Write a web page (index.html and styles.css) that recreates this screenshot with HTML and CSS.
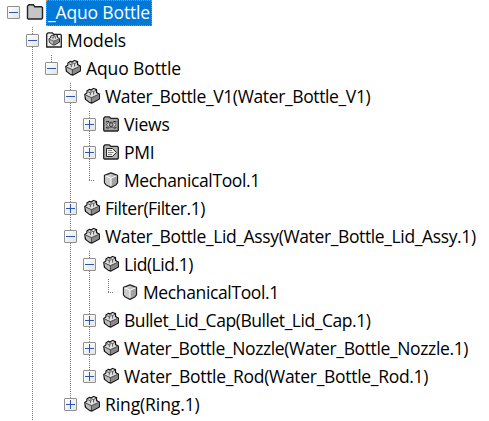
FILE: index.html
```html
<!DOCTYPE html>
<html lang="en">
<head>
  <meta charset="UTF-8" />
  <title>Aquo Bottle</title>
  <link rel="stylesheet" href="styles.css">
</head>
<body>
  <!-- shared icons -->
  <svg class="icon-defs" width="0" height="0">
    <linearGradient id="metal" x1="0" y1="0" x2="1" y2="1">
      <stop offset="0" stop-color="#eee" />
      <stop offset="1" stop-color="#777" />
    </linearGradient>
    <symbol id="folder" viewBox="0 0 18 18">
      <path d="M1.500 15.300V3.200L3 1.700h4.200l1.600 2h6.500l1.200 1v10.400l-.8.900H2.300z" fill="#c6c6c6" stroke="#222" stroke-width="1.400" />
    </symbol>
    <symbol id="part" viewBox="0 0 18 18">
      <path d="M1.800 7.500L4 6V4L6.200 2.500 8 3l2.500-1.500L13.500 2.700v3L16.300 7v5L9 16 6.500 15.300 2.500 12.300z" fill="#aaa" stroke="#111" stroke-width="1.300" stroke-linejoin="round" />
      <path d="M2.500 8l5.500 2.700v4.500l-1.500-.5-3.400-2.700z" fill="#bbb" />
      <path d="M2.700 7.600L4.600 6.400V4.300L6.300 3.200l1.700.5 2.500-1.400 2.300.9v3L15.500 7.200 8.500 10.200z" fill="#e2e2e2" />
      <path d="M8.500 10.800l7.200-3.200v4l-7 3.700z" fill="#888" />
      <path d="M4.800 4.700L7.300 5.700v2.500M8 3.700v2.500M8.300 3.600l2.300 1v3M10.600 4.600l2.400-1.300M3 8.200l5.300 2.500 7-3.200M8.400 10.700v4.500" fill="none" stroke="#333" stroke-width=".8" />
    </symbol>
    <symbol id="models" viewBox="0 0 18 18">
      <path d="M1.700 16V3.200L3 1.800h4.200l1.600 1.500h6.700l.8.900V16z" fill="#eee" stroke="#222" stroke-width="1.300" />
      <use href="#part" x="2.700" y="2.500" width="13" height="13" />
    </symbol>
    <symbol id="views" viewBox="0 0 18 18">
      <path d="M1.700 15.300V3.200L3 1.800h4.200l1.600 1.500h6.500l1 1v11l-.7.700H2.400z" fill="#a5a5a5" stroke="#222" stroke-width="1.300" />
      <path d="M4.500 7.500v-1H7M11.500 6.500H14v1M14 12v1h-2.500M7 13H4.500v-1" fill="none" stroke="#222" stroke-width=".9" />
      <path d="M4.300 9.700L7 7.300h4.500l2.700 2.400-2.700 2.500H7z" fill="#ddd" stroke="#333" stroke-width=".8" />
      <circle cx="9.200" cy="9.700" r="1.900" fill="#aaa" stroke="#222" stroke-width=".9" />
    </symbol>
    <symbol id="pmi" viewBox="0 0 18 18">
      <path d="M1.700 15.300V3.200L3 1.800h4.200l1.600 1.500h6.500l1 1v11l-.7.700H2.400z" fill="#b5b5b5" stroke="#222" stroke-width="1.300" />
      <path d="M4.500 5.500h6l4 4-4 4h-6z" fill="#eef2e8" stroke="#222" />
      <path d="M6 7.500h4M6 9.500h5.500M6 11.500h4" stroke="#777" stroke-width=".9" />
    </symbol>
    <symbol id="cube" viewBox="0 0 18 18">
      <path d="M2.500 4.300L9 1.800l6.500 2.500v7.500L13.700 14 9 16.300 4.300 14l-1.800-2.200z" fill="url(#metal)" stroke="#222" stroke-width="1.300" stroke-linejoin="round" />
      <path d="M3.200 5L9 7.300v8.200L4.700 13.500l-1.500-2z" fill="#c9c9c9" />
      <path d="M14.800 5L9 7.300v8.200l4.300-2 1.500-2z" fill="#a2a2a2" />
      <path d="M3.500 4.800L9 7.200l5.500-2.400M9 7.200v7.500" fill="none" stroke="#fff" />
    </symbol>
  </svg>

  <ul class="tree">
    <li>
      <div class="row"><span class="toggle"></span><svg class="icon"><use href="#folder" /></svg><span class="label selected">_Aquo Bottle</span></div>
      <ul>
        <li class="open-ended">
          <div class="row"><span class="toggle"></span><svg class="icon"><use href="#models" /></svg><span class="label wide">Models</span></div>
          <ul>
            <li>
              <div class="row"><span class="toggle"></span><svg class="icon"><use href="#part" /></svg><span class="label wide">Aquo Bottle</span></div>
              <ul>
                <li>
                  <div class="row"><span class="toggle"></span><svg class="icon"><use href="#part" /></svg><span class="label snug">Water_Bottle_V1(Water_Bottle_V1)</span></div>
                  <ul>
                    <li><div class="row"><span class="toggle plus"></span><svg class="icon"><use href="#views" /></svg><span class="label">Views</span></div></li>
                    <li><div class="row"><span class="toggle plus"></span><svg class="icon"><use href="#pmi" /></svg><span class="label">PMI</span></div></li>
                    <li><div class="row"><span class="elbow"></span><svg class="icon"><use href="#cube" /></svg><span class="label snug">MechanicalTool.1</span></div></li>
                  </ul>
                </li>
                <li><div class="row"><span class="toggle plus"></span><svg class="icon"><use href="#part" /></svg><span class="label tight">Filter(Filter.1)</span></div></li>
                <li>
                  <div class="row"><span class="toggle"></span><svg class="icon"><use href="#part" /></svg><span class="label snug">Water_Bottle_Lid_Assy(Water_Bottle_Lid_Assy.1)</span></div>
                  <ul>
                    <li>
                      <div class="row"><span class="toggle"></span><svg class="icon"><use href="#part" /></svg><span class="label tight">Lid(Lid.1)</span></div>
                      <ul>
                        <li><div class="row"><span class="elbow"></span><svg class="icon"><use href="#cube" /></svg><span class="label snug">MechanicalTool.1</span></div></li>
                      </ul>
                    </li>
                    <li><div class="row"><span class="toggle plus"></span><svg class="icon"><use href="#part" /></svg><span class="label tight">Bullet_Lid_Cap(Bullet_Lid_Cap.1)</span></div></li>
                    <li><div class="row"><span class="toggle plus"></span><svg class="icon"><use href="#part" /></svg><span class="label snug">Water_Bottle_Nozzle(Water_Bottle_Nozzle.1)</span></div></li>
                    <li><div class="row"><span class="toggle plus"></span><svg class="icon"><use href="#part" /></svg><span class="label mild">Water_Bottle_Rod(Water_Bottle_Rod.1)</span></div></li>
                  </ul>
                </li>
                <li><div class="row"><span class="toggle plus"></span><svg class="icon"><use href="#part" /></svg><span class="label wide">Ring(Ring.1)</span></div></li>
              </ul>
            </li>
          </ul>
        </li>
      </ul>
    </li>
  </ul>
</body>
</html>
```
FILE: styles.css
```css
body {
  margin: 0;
  height: 421px;
  overflow: hidden;
  background-color: #fff;
  color: #000;
  font-family: "Open Sans", "Noto Sans", sans-serif;
  font-size: 17.5px;
  letter-spacing: -0.2px;
}

.icon-defs {
  display: block;
}

ul {
  list-style: none;
  margin: 0;
  padding: 0 0 0 19px;
}

.tree {
  margin-top: -1px;
  padding-left: 7px;
}

/* dotted guide line through the toggles */
.tree ul > li {
  background: repeating-linear-gradient(to bottom, #777 0 1px, transparent 1px 2px) 6px 0 / 1px 100% no-repeat;
}

.tree ul > li:last-child {
  background-size: 1px 14px;
}

.tree ul > li.open-ended {
  background-size: 1px 100%;
  padding-bottom: 10px;
}

.row {
  display: flex;
  align-items: center;
  height: 28px;
  white-space: nowrap;
}

.toggle {
  box-sizing: border-box;
  flex: none;
  width: 13px;
  height: 13px;
  margin-bottom: 1px;
  border: 1px solid #919191;
  border-radius: 1px;
  background:
    linear-gradient(#2c55b0, #2c55b0) 1px 5px / 9px 1px no-repeat,
    linear-gradient(135deg, #fff, #e4e4e4);
}

.toggle.plus {
  background:
    linear-gradient(#2c55b0, #2c55b0) 1px 5px / 9px 1px no-repeat,
    linear-gradient(#2c55b0, #2c55b0) 5px 1px / 1px 9px no-repeat,
    linear-gradient(135deg, #fff, #e4e4e4);
}

.elbow {
  flex: none;
  width: 13px;
  height: 1px;
  margin-bottom: 1px;
  background: repeating-linear-gradient(to right, #777 0 1px, transparent 1px 2px) 6px 0 / 6px 1px no-repeat;
}

.icon {
  flex: none;
  width: 18px;
  height: 18px;
  margin: 0 2px 2px 6px;
}

.label {
  box-sizing: border-box;
  height: 26px;
  padding: 0 1px 0 2px;
  line-height: 24px;
}

.label.selected {
  background-color: #0078d7;
  color: #fff;
  border: 1px dotted #e08428;
  padding: 0 1px;
  line-height: 22px;
  letter-spacing: -0.15px;
}

.wide {
  letter-spacing: -0.1px;
}

.mild {
  letter-spacing: -0.3px;
}

.snug {
  letter-spacing: -0.37px;
}

.tight {
  letter-spacing: -0.45px;
}
```
